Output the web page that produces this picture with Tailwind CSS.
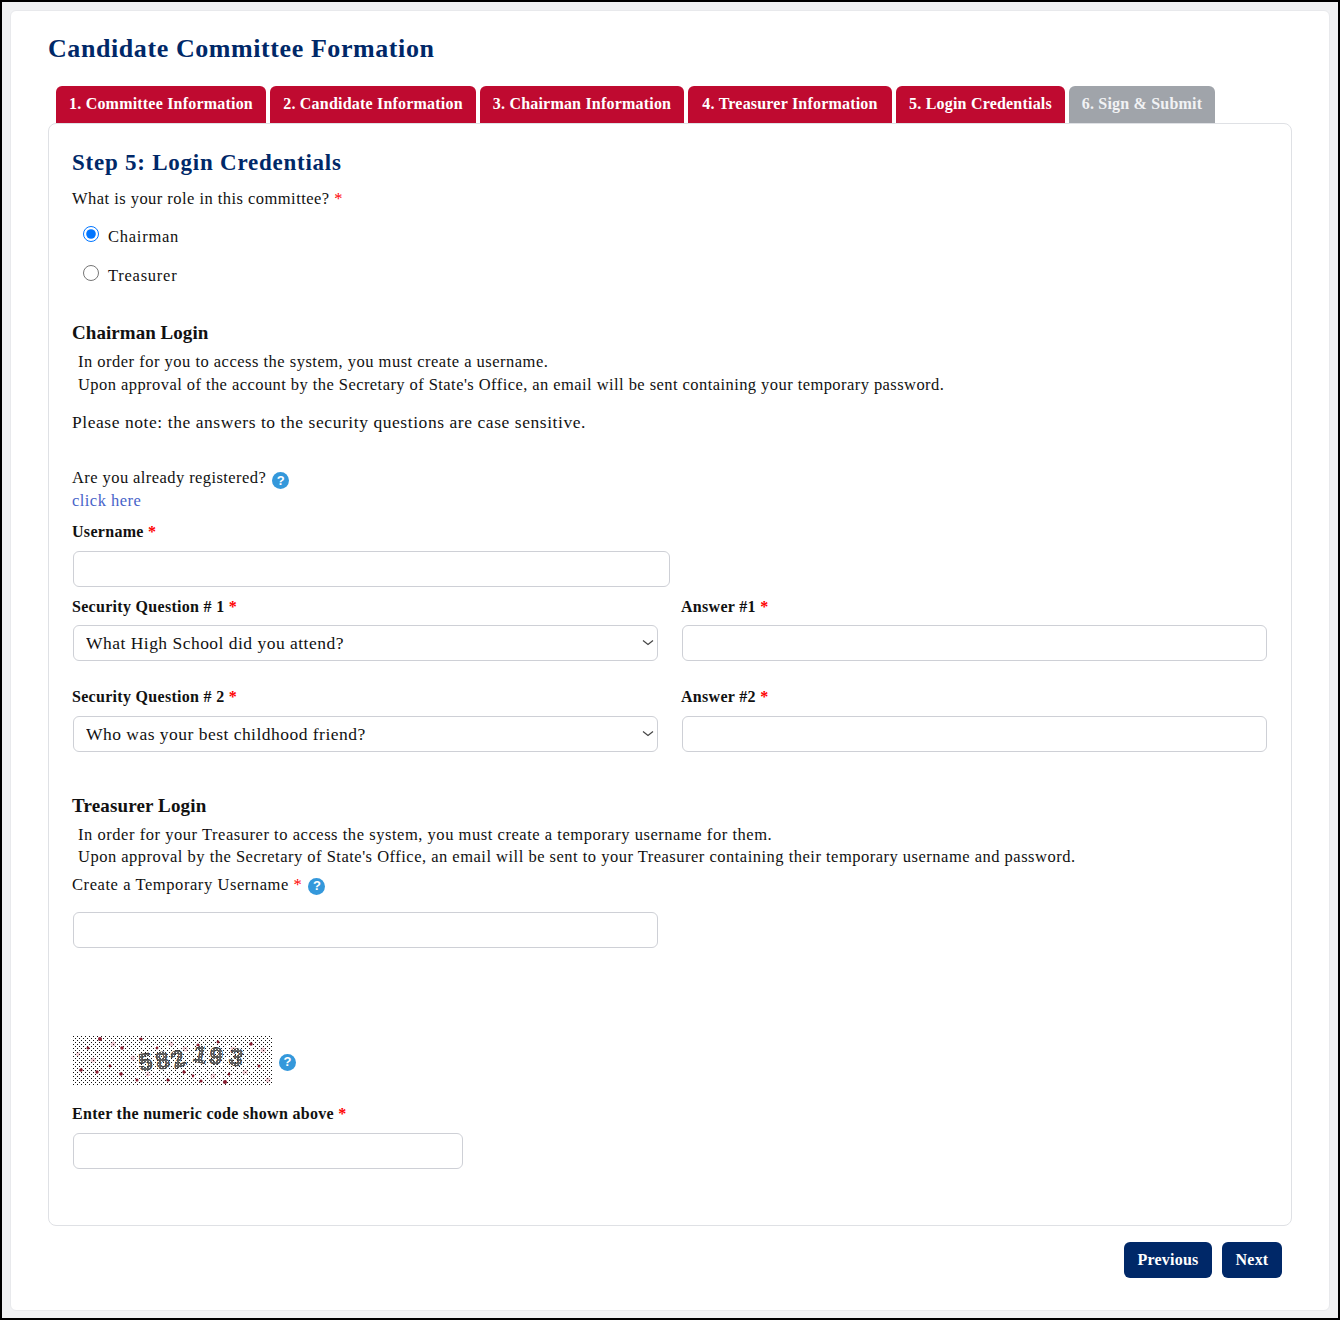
<!DOCTYPE html>
<html lang="en">
<head>
<meta charset="UTF-8">
<title>Candidate Committee Formation</title>
<script src="https://cdn.jsdelivr.net/npm/@tailwindcss/browser@4"></script>
</head>
<body class="bg-black">
<div class="h-[1320px] w-[1340px] border-2 border-black bg-[#f1f2f4] p-2 font-['Liberation_Serif',serif] text-[16.5px] tracking-[0.46px] text-[#111]">
  <div class="h-[1301px] w-[1320px] rounded-md border border-[#e8e9ec] bg-white px-[37px]">
    <h1 class="mt-[20px] h-[36px] text-[26px] leading-[36px] font-bold tracking-[0.58px] text-[#002868]">Candidate Committee Formation</h1>

    <!-- tabs -->
    <div class="mt-[19px] ml-2 flex h-[37px] gap-1 text-[16px] font-bold tracking-[0.2px] text-white">
      <a class="flex w-[210px] items-center justify-center rounded-t-md bg-[#bf0a30] pb-[2px]">1. Committee Information</a>
      <a class="flex w-[206px] items-center justify-center rounded-t-md bg-[#bf0a30] pb-[2px]">2. Candidate Information</a>
      <a class="flex w-[204px] items-center justify-center rounded-t-md bg-[#bf0a30] pb-[2px]">3. Chairman Information</a>
      <a class="flex w-[204px] items-center justify-center rounded-t-md bg-[#bf0a30] pb-[2px]">4. Treasurer Information</a>
      <a class="flex w-[169px] items-center justify-center rounded-t-md bg-[#bf0a30] pb-[2px]">5. Login Credentials</a>
      <a class="flex w-[146px] items-center justify-center rounded-t-md bg-[#a0a4aa] pb-[2px] text-[#f1f2f4]">6. Sign &amp; Submit</a>
    </div>

    <!-- step panel -->
    <div class="h-[1103px] w-[1244px] rounded-lg border border-[#dfe1e5] px-6">
      <h2 class="mt-[24px] -ml-px h-[30px] text-[23px] leading-[30px] font-bold tracking-[0.76px] text-[#002868]">Step 5: Login Credentials</h2>
      <p class="mt-[11px] -ml-px h-[20px] leading-[20px]">What is your role in this committee? <span class="text-[#f00]">*</span></p>

      <div class="mt-[16px] flex h-[24px] items-center pl-[10px]">
        <input type="radio" name="role" checked class="mb-[6px] h-4 w-4">
        <label class="ml-[9px] pt-[1px] tracking-[0.75px]">Chairman</label>
      </div>
      <div class="mt-[15px] flex h-[24px] items-center pl-[10px]">
        <input type="radio" name="role" class="mb-[6px] h-4 w-4">
        <label class="ml-[9px] pt-[1px] tracking-[0.75px]">Treasurer</label>
      </div>

      <h3 class="mt-[33px] -ml-px h-[24px] text-[19px] leading-[24px] font-bold tracking-[0.05px]">Chairman Login</h3>
      <p class="mt-[6px] ml-[5px] h-[22px] leading-[22px] tracking-[0.49px]">In order for you to access the system, you must create a username.</p>
      <p class="ml-[5px] h-[23px] leading-[23px] tracking-[0.435px]">Upon approval of the account by the Secretary of State's Office, an email will be sent containing your temporary password.</p>
      <p class="mt-[15px] -ml-px h-[22px] text-[17.5px] leading-[22px] tracking-[0.56px]">Please note: the answers to the security questions are case sensitive.</p>

      <div class="mt-[33px] -ml-px flex h-[24px] items-center">
        <span class="tracking-[0.42px]">Are you already registered?</span>
        <span class="mt-[5px] ml-[6px] flex h-[17px] w-[17px] items-center justify-center rounded-full bg-[#3498db] font-['Liberation_Sans',sans-serif] text-[13px] font-bold tracking-normal text-white">?</span>
      </div>
      <a class="-ml-px block h-[22px] leading-[22px] text-[#4763c9]">click here</a>
      <label class="mt-[8px] -ml-px block h-[22px] text-[16px] leading-[23px] font-bold tracking-[0.3px]">Username <span class="text-[#f00]">*</span></label>
      <input type="text" class="mt-[9px] block h-[36px] w-[597px] rounded-md border border-[#ced0d6]">

      <div class="grid grid-cols-2 gap-x-6">
        <div>
          <label class="mt-[8px] -ml-px block h-[22px] text-[16px] leading-[23px] font-bold tracking-[0.3px]">Security Question # 1 <span class="text-[#f00]">*</span></label>
          <div class="relative mt-[8px]">
            <select class="block h-[36px] w-full appearance-none rounded-md border border-[#ced0d6] bg-white pt-[1px] pl-3 text-[17.5px] tracking-[0.48px]">
              <option>What High School did you attend?</option>
            </select>
            <svg class="absolute top-[14px] right-[4px] h-[8px] w-[12px]" viewBox="0 0 12 8" fill="none" stroke="#444" stroke-width="1.2"><path d="M1 1.5 L6 5.5 L11 1.5"/></svg>
          </div>
        </div>
        <div>
          <label class="mt-[8px] -ml-px block h-[22px] text-[16px] leading-[23px] font-bold tracking-[0.3px]">Answer #1 <span class="text-[#f00]">*</span></label>
          <input type="text" class="mt-[8px] block h-[36px] w-full rounded-md border border-[#ced0d6]">
        </div>
        <div>
          <label class="mt-[24px] -ml-px block h-[22px] text-[16px] leading-[23px] font-bold tracking-[0.3px]">Security Question # 2 <span class="text-[#f00]">*</span></label>
          <div class="relative mt-[9px]">
            <select class="block h-[36px] w-full appearance-none rounded-md border border-[#ced0d6] bg-white pt-[1px] pl-3 text-[17.5px] tracking-[0.48px]">
              <option>Who was your best childhood friend?</option>
            </select>
            <svg class="absolute top-[14px] right-[4px] h-[8px] w-[12px]" viewBox="0 0 12 8" fill="none" stroke="#444" stroke-width="1.2"><path d="M1 1.5 L6 5.5 L11 1.5"/></svg>
          </div>
        </div>
        <div>
          <label class="mt-[24px] -ml-px block h-[22px] text-[16px] leading-[23px] font-bold tracking-[0.3px]">Answer #2 <span class="text-[#f00]">*</span></label>
          <input type="text" class="mt-[9px] block h-[36px] w-full rounded-md border border-[#ced0d6]">
        </div>
      </div>

      <h3 class="mt-[42px] -ml-px h-[24px] text-[19px] leading-[24px] font-bold tracking-[0.15px]">Treasurer Login</h3>
      <p class="mt-[6px] ml-[5px] h-[22px] leading-[22px] tracking-[0.54px]">In order for your Treasurer to access the system, you must create a temporary username for them.</p>
      <p class="ml-[5px] h-[22px] leading-[22px] tracking-[0.495px]">Upon approval by the Secretary of State's Office, an email will be sent to your Treasurer containing their temporary username and password.</p>
      <div class="mt-[5px] -ml-px flex h-[24px] items-center">
        <span class="tracking-[0.57px]">Create a Temporary Username <span class="text-[#f00]">*</span></span>
        <span class="mt-[2px] ml-[6px] flex h-[17px] w-[17px] items-center justify-center rounded-full bg-[#3498db] font-['Liberation_Sans',sans-serif] text-[13px] font-bold tracking-normal text-white">?</span>
      </div>
      <input type="text" class="mt-[15px] block h-[36px] w-[585px] rounded-md border border-[#ced0d6]">

      <!-- captcha -->
      <div class="mt-[88px] flex h-[50px] items-center">
        <svg class="h-[50px] w-[200px]" viewBox="0 0 200 50">
          <defs>
            <pattern id="dots" width="4" height="4" patternUnits="userSpaceOnUse">
              <rect x="0" y="0" width="1" height="1" fill="#111"/>
              <rect x="2" y="2" width="1" height="1" fill="#111"/>
            </pattern>
            <pattern id="holes" width="3" height="3" patternUnits="userSpaceOnUse">
              <rect x="1" y="1" width="1" height="1" fill="#fff"/>
            </pattern>
          </defs>
          <rect width="200" height="50" fill="#fff"/>
          <g fill="#f3cdd5">
            <circle cx="40" cy="8" r="2.5"/><circle cx="98" cy="8" r="2.5"/><circle cx="160" cy="14" r="3"/>
            <circle cx="190" cy="14" r="2.5"/><circle cx="20" cy="24" r="2.5"/><circle cx="75" cy="38" r="2.5"/>
            <circle cx="140" cy="40" r="2.5"/><circle cx="195" cy="44" r="2.5"/><circle cx="60" cy="22" r="2.5"/>
            <circle cx="112" cy="13" r="2.5"/><circle cx="172" cy="36" r="2.5"/><circle cx="5" cy="18" r="2"/>
          </g>
          <rect width="200" height="50" fill="url(#dots)"/>
          <g fill="#8a1c30">
            <circle cx="27" cy="3" r="2"/><circle cx="68" cy="3" r="1.6"/><circle cx="15" cy="12" r="1.5"/>
            <circle cx="49" cy="12" r="1.8"/><circle cx="125" cy="9" r="1.6"/><circle cx="178" cy="8" r="1.7"/>
            <circle cx="8" cy="34" r="1.8"/><circle cx="24" cy="36" r="1.7"/><circle cx="48" cy="38" r="1.8"/>
            <circle cx="95" cy="44" r="1.6"/><circle cx="111" cy="36" r="1.7"/><circle cx="152" cy="46" r="2"/>
            <circle cx="156" cy="38" r="1.5"/><circle cx="186" cy="30" r="1.5"/><circle cx="165" cy="22" r="1.6"/>
            <circle cx="64" cy="44" r="1.5"/><circle cx="128" cy="45" r="1.6"/><circle cx="37" cy="30" r="1.4"/>
            <circle cx="120" cy="40" r="1.4"/><circle cx="145" cy="6" r="1.4"/><circle cx="84" cy="12" r="1.4"/>
          </g>
          <g font-family="'Liberation Sans',sans-serif" font-weight="700" font-size="24" fill="#666" stroke="#333" stroke-width="0.8">
            <text x="67" y="35" transform="rotate(-8 67 35)">5</text>
            <text x="85" y="34" transform="rotate(-14 85 34)">8</text>
            <text x="102" y="33" transform="rotate(-22 102 33)">2</text>
            <text x="119" y="25" transform="rotate(12 119 25)">1</text>
            <text x="135" y="27" transform="rotate(10 135 27)">9</text>
            <text x="155" y="28" transform="rotate(12 155 28)">3</text>
          </g>
          <rect x="60" y="8" width="120" height="34" fill="url(#holes)"/>
        </svg>
        <span class="mt-[2px] ml-[6px] flex h-[17px] w-[17px] items-center justify-center rounded-full bg-[#3498db] font-['Liberation_Sans',sans-serif] text-[13px] font-bold tracking-normal text-white">?</span>
      </div>
      <label class="mt-[16px] -ml-px block h-[22px] text-[16px] leading-[23px] font-bold tracking-[0.3px]">Enter the numeric code shown above <span class="text-[#f00]">*</span></label>
      <input type="text" class="mt-[9px] block h-[36px] w-[390px] rounded-md border border-[#ced0d6]">
    </div>

    <div class="mt-[16px] flex justify-end gap-[10px] pr-[10px]">
      <button class="h-[36px] w-[88px] rounded-md bg-[#002868] text-[16px] font-bold tracking-[0.2px] text-white">Previous</button>
      <button class="h-[36px] w-[60px] rounded-md bg-[#002868] text-[16px] font-bold tracking-[0.2px] text-white">Next</button>
    </div>
  </div>
</div>
</body>
</html>
